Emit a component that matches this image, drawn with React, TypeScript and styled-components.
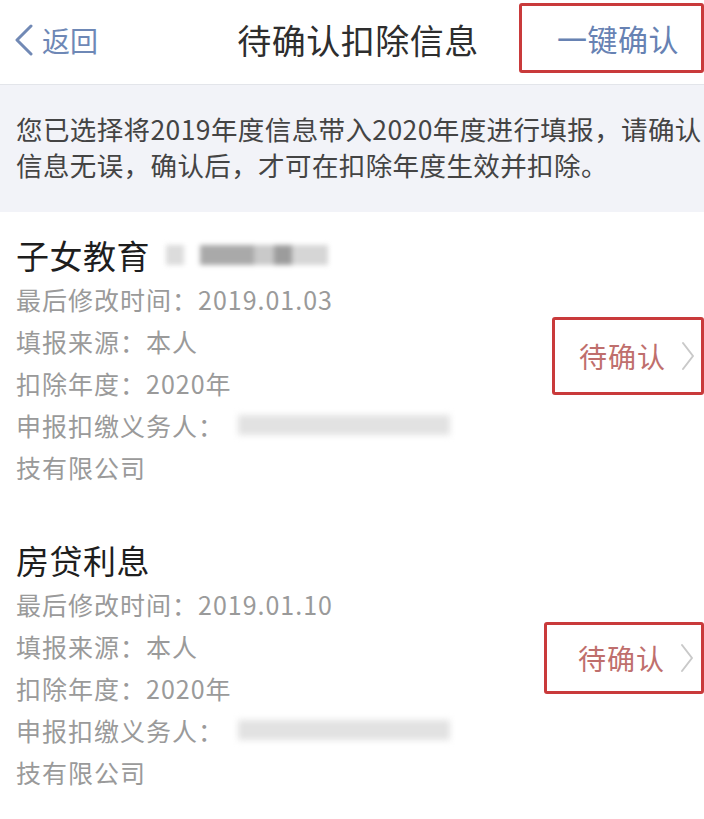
import { FC } from "react";
import styled, { createGlobalStyle } from "styled-components";

const GlobalStyle = createGlobalStyle`
  * { box-sizing: border-box; }
  body {
    margin: 0;
    background: #ffffff;
    font-family: "Noto Sans CJK SC", "Noto Sans", sans-serif;
  }
`;

const Page = styled.div`
  width: 704px;
  min-height: 819px;
  background: #ffffff;
  overflow: hidden;
`;

const Header = styled.header`
  display: grid;
  grid-template-columns: 1fr auto 1fr;
  align-items: center;
  height: 85px;
  border-bottom: 1px solid #e3e5ea;
`;

const BackLink = styled.a`
  display: flex;
  align-items: center;
  gap: 8px;
  padding-left: 14px;
  margin-bottom: 5px;
  color: #6e88b6;
  font-size: 28px;
  cursor: pointer;
`;

const Title = styled.h1`
  margin: 0 0 5px 0;
  font-size: 34px;
  font-weight: 400;
  color: #2e2e2e;
  letter-spacing: 0.5px;
  transform: translateX(6px);
`;

const HeaderRight = styled.div`
  display: flex;
  justify-content: flex-end;
  align-self: start;
  padding-top: 3px;
`;

const Annotation = styled.div<{ $w: number; $h: number }>`
  display: flex;
  align-items: center;
  justify-content: flex-end;
  width: ${(p) => p.$w}px;
  height: ${(p) => p.$h}px;
  border: 3px solid #c93a3b;
  border-radius: 3px;
`;

const ConfirmAll = styled.span`
  padding-right: 22px;
  font-size: 30px;
  color: #6782b3;
  letter-spacing: 0.5px;
`;

const Notice = styled.div`
  background: #f2f3f8;
  padding: 26px 8px 29px 16px;
  color: #444444;
  font-size: 26.5px;
  line-height: 36px;
  letter-spacing: 0.4px;
  white-space: nowrap;
`;

const Card = styled.section`
  display: flex;
  align-items: center;
  justify-content: space-between;
  padding: 20px 0 29px 16px;
`;

const CardBody = styled.div`
  display: flex;
  flex-direction: column;
`;

const CardTitle = styled.div`
  display: flex;
  align-items: center;
  height: 46px;
  font-size: 33px;
  color: #1e1e1e;
  letter-spacing: 0.5px;
`;

const Row = styled.div`
  display: flex;
  align-items: center;
  height: 42px;
  font-size: 25px;
  color: #9a9a9a;
  letter-spacing: 1px;
`;

const Blur = styled.div<{ $w: number; $shade: string }>`
  width: ${(p) => p.$w}px;
  height: 20px;
  margin-left: 14px;
  background: ${(p) => p.$shade};
  filter: blur(3px);
`;

const TitleBlur = styled.div`
  display: flex;
  align-items: center;
  margin-left: 16px;
  height: 22px;
  filter: blur(2.5px);
`;

const Patch = styled.div<{ $w: number; $c: string }>`
  width: ${(p) => p.$w}px;
  height: 20px;
  background: ${(p) => p.$c};
`;

const PendingWrap = styled.div<{ $shift: number }>`
  margin-top: ${(p) => p.$shift}px;
`;

const Pending = styled.div<{ $pad: number }>`
  display: flex;
  align-items: center;
  justify-content: flex-start;
  gap: 15px;
  width: 100%;
  height: 100%;
  padding-left: ${(p) => p.$pad}px;
`;

const PendingText = styled.span`
  font-size: 28px;
  color: #bf6f6d;
  letter-spacing: 1px;
`;

const BackChevron: FC = () => (
  <svg width="20" height="32" viewBox="0 0 20 32">
    <polyline
      points="17,2 3,16 17,30"
      fill="none"
      stroke="#7189b5"
      strokeWidth="3"
      strokeLinecap="round"
      strokeLinejoin="round"
    />
  </svg>
);

const RightChevron: FC = () => (
  <svg width="14" height="30" viewBox="0 0 14 30">
    <polyline
      points="2,2 12,15 2,28"
      fill="none"
      stroke="#c9c9c9"
      strokeWidth="2"
      strokeLinecap="round"
      strokeLinejoin="round"
    />
  </svg>
);

interface Item {
  title: string;
  date: string;
  hasTitleBlur: boolean;
  boxHeight: number;
  boxShift: number;
  boxWidth: number;
  boxPad: number;
}

const items: Item[] = [
  { title: "子女教育", date: "2019.01.03", hasTitleBlur: true, boxHeight: 78, boxShift: -8, boxWidth: 152, boxPad: 24 },
  { title: "房贷利息", date: "2019.01.10", hasTitleBlur: false, boxHeight: 72, boxShift: -14, boxWidth: 160, boxPad: 31 },
];

const DeductionCard: FC<{ item: Item }> = ({ item }) => (
  <Card>
    <CardBody>
      <CardTitle>
        {item.title}
        {item.hasTitleBlur && (
          <TitleBlur>
            <Patch $w={18} $c="#dcdcdc" />
            <Patch $w={16} $c="#ffffff" />
            <Patch $w={54} $c="#a9a9a9" />
            <Patch $w={20} $c="#c9c9c9" />
            <Patch $w={18} $c="#9c9c9c" />
            <Patch $w={36} $c="#d6d6d6" />
          </TitleBlur>
        )}
      </CardTitle>
      <Row>最后修改时间：{item.date}</Row>
      <Row>填报来源：本人</Row>
      <Row>扣除年度：2020年</Row>
      <Row>
        申报扣缴义务人：
        <Blur $w={212} $shade="#e2e2e2" />
      </Row>
      <Row>技有限公司</Row>
    </CardBody>
    <PendingWrap $shift={item.boxShift}>
      <Annotation $w={item.boxWidth} $h={item.boxHeight}>
        <Pending $pad={item.boxPad}>
          <PendingText>待确认</PendingText>
          <RightChevron />
        </Pending>
      </Annotation>
    </PendingWrap>
  </Card>
);

const App: FC = () => {
  return (
    <Page>
      <GlobalStyle />
      <Header>
        <BackLink>
          <BackChevron />
          返回
        </BackLink>
        <Title>待确认扣除信息</Title>
        <HeaderRight>
          <Annotation $w={185} $h={70}>
            <ConfirmAll>一键确认</ConfirmAll>
          </Annotation>
        </HeaderRight>
      </Header>
      <Notice>
        您已选择将2019年度信息带入2020年度进行填报，请确认
        <br />
        信息无误，确认后，才可在扣除年度生效并扣除。
      </Notice>
      {items.map((item) => (
        <DeductionCard key={item.title} item={item} />
      ))}
    </Page>
  );
};

export default App;
